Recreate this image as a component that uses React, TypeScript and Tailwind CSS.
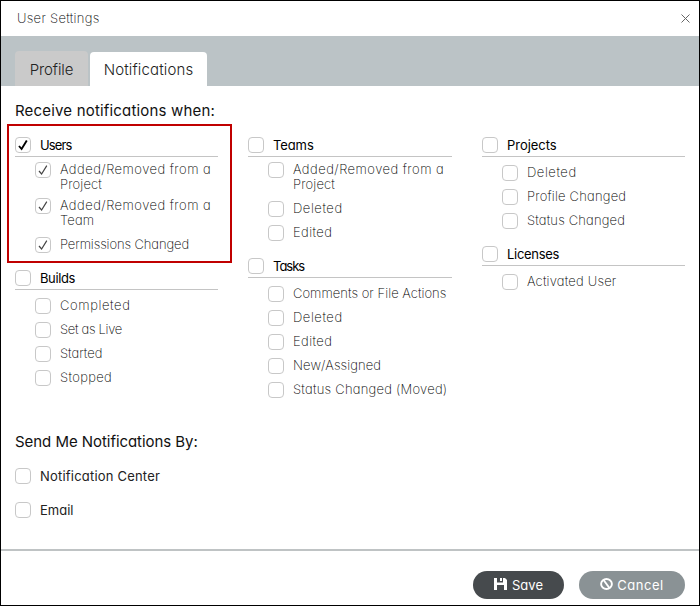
type Line = { text: string; track: string };
type Item = { lines: Line[]; checked?: boolean };
type Group = { title: string; track: string; checked?: boolean; items: Item[] };

const item = (text: string, track = 'tracking-[0.1px]'): Item => ({ lines: [{ text, track }] });
const membership = (target: string, checked = false): Item => ({
  checked,
  lines: [
    { text: 'Added/Removed from a', track: 'tracking-[0.47px]' },
    { text: target, track: 'tracking-[0.15px]' },
  ],
});

const users: Group = {
  title: 'Users',
  track: 'tracking-[-0.9px]',
  checked: true,
  items: [
    membership('Project', true),
    membership('Team', true),
    { ...item('Permissions Changed', 'tracking-[-0.1px]'), checked: true },
  ],
};
const builds: Group = {
  title: 'Builds',
  track: 'tracking-[-0.4px]',
  items: [
    item('Completed', 'tracking-[0.6px]'),
    item('Set as Live', 'tracking-[-0.3px]'),
    item('Started', 'tracking-normal'),
    item('Stopped', 'tracking-[0.35px]'),
  ],
};
const teams: Group = {
  title: 'Teams',
  track: 'tracking-[-0.1px]',
  items: [membership('Project'), item('Deleted', 'tracking-[0.55px]'), item('Edited', 'tracking-[0.4px]')],
};
const tasks: Group = {
  title: 'Tasks',
  track: 'tracking-[-1px]',
  items: [
    item('Comments or File Actions', 'tracking-[0.04px]'),
    item('Deleted', 'tracking-[0.55px]'),
    item('Edited', 'tracking-[0.4px]'),
    item('New/Assigned'),
    item('Status Changed (Moved)', 'tracking-[0.24px]'),
  ],
};
const projects: Group = {
  title: 'Projects',
  track: 'tracking-[-0.05px]',
  items: [
    item('Deleted', 'tracking-[0.55px]'),
    item('Profile Changed', 'tracking-[0.2px]'),
    item('Status Changed', 'tracking-[0.17px]'),
  ],
};
const licenses: Group = {
  title: 'Licenses',
  track: 'tracking-[-0.3px]',
  items: [item('Activated User', 'tracking-[0.2px]')],
};

const columns: Group[][] = [
  [users, builds],
  [teams, tasks],
  [projects, licenses],
];

function Checkbox({ checked, bold }: { checked?: boolean; bold?: boolean }) {
  return (
    <span className="flex h-4 w-4 shrink-0 items-center justify-center rounded-[4px] border border-[#c8c8c8] bg-white">
      {checked && (
        <svg width="14" height="14" viewBox="0 0 14 14" fill="none" className={bold ? 'text-black' : 'text-[#444]'}>
          <path d="M3 8 L5.6 11 L10.8 2.6" stroke="currentColor" strokeWidth={bold ? 1.9 : 1.2} />
        </svg>
      )}
    </span>
  );
}

function GroupBlock({ group }: { group: Group }) {
  return (
    <section>
      <div className="flex h-5 items-start gap-[9px] border-b border-[#c4c4c4]">
        <Checkbox checked={group.checked} bold />
        <h3 className={`text-[13px] leading-[17px] font-normal text-black ${group.track}`}>{group.title}</h3>
      </div>
      <ul className="pt-1 pl-5">
        {group.items.map((it, i) => (
          <li key={i} className={`flex gap-[9px] ${it.lines.length > 1 ? 'h-9 pt-px' : 'h-6 pt-1'}`}>
            <Checkbox checked={it.checked} />
            <span className="text-[13px] leading-[15px] font-extralight whitespace-nowrap text-black">
              {it.lines.map((line) => (
                <span key={line.text} className={`block ${line.track}`}>
                  {line.text}
                </span>
              ))}
            </span>
          </li>
        ))}
      </ul>
    </section>
  );
}

export default function App() {
  return (
    <div className="relative flex h-[606px] w-[700px] flex-col overflow-hidden border border-black bg-white font-['Inter','Liberation_Sans',sans-serif] [font-feature-settings:'cv11']">
      <header className="flex h-[35px] shrink-0 items-center justify-between pr-[9px] pl-4">
        <h1 className="text-[13px] font-extralight tracking-[0.3px] text-black">User Settings</h1>
        <svg width="9" height="9" viewBox="0 0 9 9" stroke="#666" strokeWidth="1">
          <path d="M.5 .5 L8.5 8.5 M8.5 .5 L.5 8.5" />
        </svg>
      </header>
      <nav className="flex h-[50px] shrink-0 items-end gap-[2px] bg-[#bbc3c6] pl-[14px]">
        <div className="flex h-[35px] w-[73px] items-center justify-center rounded-t-[4px] bg-[#cacaca] pt-[3px] text-[15px] font-light tracking-[-0.1px] text-[#222]">
          Profile
        </div>
        <div className="flex h-[34px] w-[117px] items-center justify-center rounded-t-[4px] bg-white pt-[2px] text-[15px] font-light tracking-[0.15px] text-[#222]">
          Notifications
        </div>
      </nav>
      <main className="h-[463px] shrink-0 px-[14px] pt-[15px]">
        <h2 className="h-9 text-[15px] leading-[20px] font-normal tracking-[0.18px] text-[#111]">Receive notifications when:</h2>
        <div className="grid h-[296px] grid-cols-[203px_204px_203px] items-start gap-x-[30px]">
          {columns.map((groups, i) => (
            <div key={i} className="flex flex-col gap-[13px]">
              {groups.map((g) => (
                <GroupBlock key={g.title} group={g} />
              ))}
            </div>
          ))}
        </div>
        <h2 className="h-[35px] text-[15px] leading-[18px] font-normal tracking-[-0.05px] text-[#111]">Send Me Notifications By:</h2>
        <div className="flex flex-col gap-[17px]">
          <div className="flex gap-[9px] text-[13px] leading-[17px] tracking-[0.2px] text-[#222]">
            <Checkbox />
            Notification Center
          </div>
          <div className="flex gap-[9px] text-[13px] leading-[17px] text-[#222]">
            <Checkbox />
            Email
          </div>
        </div>
      </main>
      <footer className="flex flex-1 items-start justify-end gap-[15px] border-t-2 border-[#bfc3c4] pt-5 pr-[14px]">
        <button className="flex h-7 w-[91px] items-start justify-center gap-[5px] rounded-full bg-[#464a4d] pt-[7px] text-[13px] leading-[15px] text-white">
          <svg width="13" height="12" viewBox="0 0 13 12" fill="white">
            <path fillRule="evenodd" d="M0 0H3V4.5H9V0H11L13 2V12H10V7H3V12H0Z M6 0H8V3H6Z" />
          </svg>
          Save
        </button>
        <button className="flex h-7 w-[106px] items-start justify-center gap-1 rounded-full bg-[#8a9295] pt-[7px] text-[13px] leading-[15px] tracking-[0.5px] text-white">
          <svg width="13" height="12" viewBox="0 0 13 12" fill="none" stroke="white" strokeWidth="1.9">
            <ellipse cx="6.5" cy="6" rx="5.4" ry="5" />
            <path d="M3.6 2 L9.4 10" />
          </svg>
          Cancel
        </button>
      </footer>
      <div className="pointer-events-none absolute top-[123px] left-[6px] h-[139px] w-[225px] border-2 border-[#c00000]" />
    </div>
  );
}
